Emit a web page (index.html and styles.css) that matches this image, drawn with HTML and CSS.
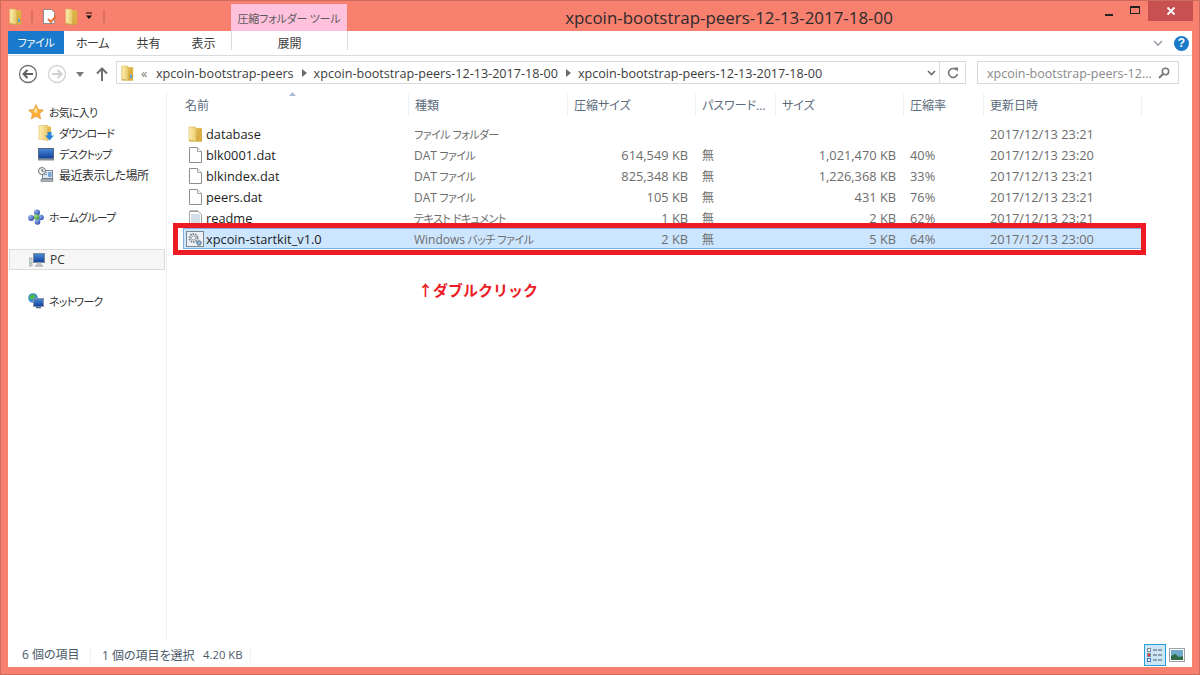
FILE: index.html
```html
<!DOCTYPE html>
<html lang="ja">
<head>
<meta charset="utf-8">
<title>xpcoin-bootstrap-peers-12-13-2017-18-00</title>
<link rel="stylesheet" href="styles.css">
</head>
<body>
<svg class="defs" width="0" height="0" aria-hidden="true">
  <defs>
    <linearGradient id="fy" x1="0" y1="0" x2="1" y2="0"><stop offset="0" stop-color="#fdf0b4"/><stop offset="1" stop-color="#e9c766"/></linearGradient>
    <linearGradient id="fb" x1="0" y1="0" x2="0" y2="1"><stop offset="0" stop-color="#e7c25c"/><stop offset="1" stop-color="#c99c34"/></linearGradient>
    <linearGradient id="scr" x1="0" y1="0" x2="0" y2="1"><stop offset="0" stop-color="#4a8bd8"/><stop offset="1" stop-color="#123f9c"/></linearGradient>
    <radialGradient id="sb" cx=".35" cy=".3" r=".8"><stop offset="0" stop-color="#8fb0ee"/><stop offset="1" stop-color="#2a47a8"/></radialGradient>
    <radialGradient id="sg" cx=".35" cy=".3" r=".8"><stop offset="0" stop-color="#a6e08a"/><stop offset="1" stop-color="#2f8f2a"/></radialGradient>
    <symbol id="folder" viewBox="0 0 16 16" preserveAspectRatio="none">
      <path d="M2 1h6l1.500 1H15v13.500H2z" fill="url(#fb)"/>
      <path d="M2 1h6.500l1 2v12.500L2 14z" fill="url(#fy)" stroke="#d9b65a" stroke-width=".6"/>
      <path d="M11 3h3.500v12.500H11z" fill="#dcb044"/>
    </symbol>
    <symbol id="doc" viewBox="0 0 16 18">
      <path d="M2.500 1.500h8l4 4v11h-12z" fill="#fff" stroke="#8e8e8e"/>
      <path d="M10.500 1.500v4h4" fill="#f2f2f2" stroke="#a8a8a8"/>
    </symbol>
    <symbol id="txt" viewBox="0 0 16 18">
      <path d="M2.500 2.500h9l3 3v11h-12z" fill="#fff" stroke="#a3a3a3"/>
      <path d="M4 2v-1M6 2v-1M8 2v-1M10 2v-1" stroke="#777"/>
      <path d="M4 6h9M4 8h9M4 10h9M4 12h9M4 14h9" stroke="#a9bdd2"/>
    </symbol>
    <symbol id="bat" viewBox="0 0 18 16">
      <rect x=".5" y=".5" width="17" height="15" fill="#eef1f4" stroke="#7c8790"/>
      <circle cx="7.500" cy="7" r="4" fill="none" stroke="#77828c" stroke-width="2" stroke-dasharray="1.500 1"/>
      <circle cx="7.500" cy="7" r="2" fill="#fff" stroke="#8d98a2"/>
      <circle cx="13" cy="12" r="2.200" fill="#9db8d2" stroke="#56718a"/>
    </symbol>
    <symbol id="star" viewBox="0 0 16 16">
      <path d="M8 .5l2.300 5 5.200.6-3.900 3.600 1.100 5.300L8 12.300 3.300 15l1.100-5.300L.5 6.100l5.200-.6z" fill="#fbb03b" stroke="#e0902c" stroke-width=".6"/>
      <path d="M8 3l1.400 3.400L8 9.500 5.500 7.200z" fill="#fde6a8"/>
    </symbol>
    <symbol id="dl" viewBox="0 0 16 16">
      <path d="M1 .5h9v15l-9-1.500z" fill="url(#fy)" stroke="#d9b65a" stroke-width=".6"/>
      <path d="M10 1.500h3v8h-3z" fill="#e4b948"/>
      <path d="M9.500 7h4v3.500H16L11.500 15.500 7 10.500h2.500z" fill="#2b86d8"/>
    </symbol>
    <symbol id="desk" viewBox="0 0 16 16">
      <rect x=".5" y="2.500" width="15" height="10" fill="url(#scr)" stroke="#53667c"/>
      <rect x="0" y="12.500" width="16" height="2" fill="#7d8b9b"/>
    </symbol>
    <symbol id="recent" viewBox="0 0 16 16">
      <rect x="4.500" y="3.500" width="10" height="8" fill="#dfe7ef" stroke="#7c8790"/>
      <path d="M6 5.500h3M6 7.500h3M10.500 5.500h2.500v4h-2.500z" fill="#7fb0dd" stroke="#6ea3d4"/>
      <path d="M3 12h12v2.500H3z" fill="#aeb6bd" stroke="#6c747b" stroke-width=".6"/>
      <circle cx="4" cy="4" r="3.500" fill="#f3f3f3" stroke="#6d7379"/>
      <path d="M4 2v2.200h1.800" fill="none" stroke="#555"/>
    </symbol>
    <symbol id="home" viewBox="0 0 16 16">
      <circle cx="9" cy="3.500" r="3" fill="url(#sb)"/>
      <circle cx="3.200" cy="9" r="3" fill="url(#sb)"/>
      <circle cx="13" cy="8.500" r="2.800" fill="url(#sb)"/>
      <circle cx="9.500" cy="13" r="2.800" fill="url(#sb)"/>
      <circle cx="8.500" cy="8" r="2.700" fill="url(#sg)"/>
    </symbol>
    <symbol id="pc" viewBox="0 0 16 16">
      <rect x="0" y="6" width="3" height="8" fill="#d6dadd" stroke="#8a9198" stroke-width=".6"/>
      <path d="M1 11h1" stroke="#4cae4c"/>
      <rect x="4.500" y="1.500" width="11" height="9" fill="url(#scr)" stroke="#7f8b96"/>
      <path d="M8 10.500h4l1 3H7z" fill="#bcc3ca"/>
      <path d="M6 13.500h8v1H6z" fill="#8d959c"/>
    </symbol>
    <symbol id="net" viewBox="0 0 16 16">
      <circle cx="5" cy="5" r="4.800" fill="#3a8fd6"/>
      <path d="M2 2.500c2-1.500 5-1 6 .5L5.500 5.500 3 6.500 1 5z" fill="#4cb648"/>
      <rect x="5.500" y="5.500" width="10" height="8" fill="url(#scr)" stroke="#8a97a3"/>
      <path d="M8 13.500h5v1.800H8z" fill="#4e6c8c"/>
    </symbol>
  </defs>
</svg>

<div class="window">
  <header class="titlebar">
    <div class="qat">
      <svg class="qat-folder" width="14" height="17"><use href="#folder" width="14" height="17"/><rect x="10" y="11" width="2" height="3" fill="#4aa3e0"/></svg>
      <span class="qat-sep"></span>
      <svg class="qat-doc" width="16" height="17" viewBox="0 0 16 17">
        <path d="M1.500 1.500h8l3 3v11h-11z" fill="#fff" stroke="#8d8d8d"/>
        <path d="M6 11l3 3 5-6" fill="none" stroke="#e8703a" stroke-width="2"/>
      </svg>
      <svg class="qat-folder2" width="14" height="17"><use href="#folder" width="14" height="17"/></svg>
      <svg class="qat-more" width="8" height="8" viewBox="0 0 8 8"><path d="M1 1h6" stroke="#111"/><path d="M1 3.500h6L4 7z" fill="#111"/></svg>
      <span class="qat-sep qat-sep-last"></span>
    </div>
    <div class="tool-tab">圧縮フォルダー ツール</div>
    <h1 class="title">xpcoin-bootstrap-peers-12-13-2017-18-00</h1>
    <div class="controls">
      <span class="ctl ctl-min"><i></i></span>
      <span class="ctl ctl-max"><i></i></span>
      <span class="ctl ctl-close">
        <svg width="10" height="10" viewBox="0 0 10 10"><path d="M1.500 1.500l7 7M8.500 1.500l-7 7" stroke="#fff" stroke-width="1.800"/></svg>
      </span>
    </div>
  </header>

  <div class="app">
    <nav class="ribbon">
      <span class="tab tab-file">ファイル</span>
      <span class="tab tab-home">ホーム</span>
      <span class="tab tab-share">共有</span>
      <span class="tab tab-view">表示</span>
      <span class="tab tab-extract">展開</span>
      <span class="ribbon-end">
        <svg width="10" height="7" viewBox="0 0 10 7"><path d="M1 1l4 4 4-4" fill="none" stroke="#9aa0a6" stroke-width="1.600"/></svg>
        <span class="help">?</span>
      </span>
    </nav>

    <div class="addressbar">
      <svg class="nav-btn" width="20" height="20" viewBox="0 0 20 20">
        <circle cx="10" cy="10" r="8.500" fill="#fff" stroke="#6f6f6f" stroke-width="1.300"/>
        <path d="M15 10H6M9.500 6L5.500 10l4 4" fill="none" stroke="#5f5f5f" stroke-width="2"/>
      </svg>
      <svg class="nav-btn nav-fwd" width="20" height="20" viewBox="0 0 20 20">
        <circle cx="10" cy="10" r="8.500" fill="#fff" stroke="#d2d2d2" stroke-width="1.300"/>
        <path d="M5 10h9M10.500 6l4 4-4 4" fill="none" stroke="#cfcfcf" stroke-width="2"/>
      </svg>
      <svg class="nav-drop" width="8" height="5" viewBox="0 0 8 5"><path d="M0 0h8L4 5z" fill="#7b7b7b"/></svg>
      <svg class="nav-up" width="12" height="14" viewBox="0 0 12 14"><path d="M6 14V2M1 6.500L6 1.500l5 5" fill="none" stroke="#6f6f6f" stroke-width="2"/></svg>
      <div class="path">
        <svg class="path-folder" width="14" height="16"><use href="#folder" width="14" height="16"/><rect x="10" y="10" width="2" height="3" fill="#4aa3e0"/></svg>
        <span class="crumb-more">«</span>
        <span class="crumb">xpcoin-bootstrap-peers</span>
        <svg class="crumb-arrow" width="5" height="8" viewBox="0 0 5 8"><path d="M0 0l5 4-5 4z" fill="#6b6b6b"/></svg>
        <span class="crumb">xpcoin-bootstrap-peers-12-13-2017-18-00</span>
        <svg class="crumb-arrow" width="5" height="8" viewBox="0 0 5 8"><path d="M0 0l5 4-5 4z" fill="#6b6b6b"/></svg>
        <span class="crumb">xpcoin-bootstrap-peers-12-13-2017-18-00</span>
        <svg class="path-chev" width="9" height="6" viewBox="0 0 9 6"><path d="M1 1l3.500 3.500L8 1" fill="none" stroke="#6b6b6b" stroke-width="1.600"/></svg>
        <span class="path-refresh">
          <svg width="12" height="12" viewBox="0 0 12 12"><path d="M9.500 3A4.500 4.500 0 1 0 10.500 7" fill="none" stroke="#777" stroke-width="1.600"/><path d="M7 .5h4v4z" fill="#777"/></svg>
        </span>
      </div>
      <div class="search">
        <span class="search-text">xpcoin-bootstrap-peers-12...</span>
        <svg width="12" height="12" viewBox="0 0 12 12"><circle cx="7.500" cy="4.500" r="3.200" fill="none" stroke="#777" stroke-width="1.500"/><path d="M5 7l-4 4" stroke="#777" stroke-width="2"/></svg>
      </div>
    </div>

    <div class="middle">
      <aside class="navpane">
        <div class="navgroup">
          <div class="navitem"><svg width="16" height="16"><use href="#star"/></svg><span class="nav-kana">お気に入り</span></div>
          <div class="navitem navchild"><svg width="16" height="16"><use href="#dl"/></svg><span class="nav-kana">ダウンロード</span></div>
          <div class="navitem navchild"><svg width="16" height="16"><use href="#desk"/></svg><span class="nav-kana">デスクトップ</span></div>
          <div class="navitem navchild"><svg width="16" height="16"><use href="#recent"/></svg><span class="nav-kanji">最近表示した場所</span></div>
        </div>
        <div class="navgroup">
          <div class="navitem"><svg width="16" height="16"><use href="#home"/></svg><span class="nav-kana">ホームグループ</span></div>
        </div>
        <div class="navgroup">
          <div class="navitem navsel"><svg width="16" height="16"><use href="#pc"/></svg><span>PC</span></div>
        </div>
        <div class="navgroup">
          <div class="navitem"><svg width="16" height="16"><use href="#net"/></svg><span class="nav-kana">ネットワーク</span></div>
        </div>
      </aside>

      <section class="files">
        <div class="cols colhead">
          <div class="hc hc-name">名前<svg class="sort" width="7" height="4" viewBox="0 0 7 4"><path d="M3.500 0L7 4H0z" fill="#a9bcd0"/></svg></div>
          <div class="hc">種類</div>
          <div class="hc">圧縮サイズ</div>
          <div class="hc">パスワード...</div>
          <div class="hc">サイズ</div>
          <div class="hc">圧縮率</div>
          <div class="hc hc-last">更新日時</div>
        </div>
        <div class="cols row">
          <div class="c-name"><svg width="16" height="16"><use href="#folder"/></svg><span>database</span></div>
          <div class="c-type">ファイル フォルダー</div><div class="c-num"></div><div class="c-pw"></div><div class="c-num"></div><div class="c-pct"></div>
          <div class="c-date">2017/12/13 23:21</div>
        </div>
        <div class="cols row">
          <div class="c-name"><svg width="16" height="18"><use href="#doc"/></svg><span>blk0001.dat</span></div>
          <div class="c-type"><span class="lat">DAT</span> ファイル</div><div class="c-num">614,549 KB</div><div class="c-pw">無</div><div class="c-num">1,021,470 KB</div><div class="c-pct">40%</div>
          <div class="c-date">2017/12/13 23:20</div>
        </div>
        <div class="cols row">
          <div class="c-name"><svg width="16" height="18"><use href="#doc"/></svg><span>blkindex.dat</span></div>
          <div class="c-type"><span class="lat">DAT</span> ファイル</div><div class="c-num">825,348 KB</div><div class="c-pw">無</div><div class="c-num">1,226,368 KB</div><div class="c-pct">33%</div>
          <div class="c-date">2017/12/13 23:21</div>
        </div>
        <div class="cols row">
          <div class="c-name"><svg width="16" height="18"><use href="#doc"/></svg><span>peers.dat</span></div>
          <div class="c-type"><span class="lat">DAT</span> ファイル</div><div class="c-num">105 KB</div><div class="c-pw">無</div><div class="c-num">431 KB</div><div class="c-pct">76%</div>
          <div class="c-date">2017/12/13 23:21</div>
        </div>
        <div class="cols row">
          <div class="c-name"><svg width="16" height="18"><use href="#txt"/></svg><span>readme</span></div>
          <div class="c-type">テキスト ドキュメント</div><div class="c-num">1 KB</div><div class="c-pw">無</div><div class="c-num">2 KB</div><div class="c-pct">62%</div>
          <div class="c-date">2017/12/13 23:21</div>
        </div>
        <div class="cols row row-sel">
          <div class="c-name"><svg width="18" height="16"><use href="#bat"/></svg><span>xpcoin-startkit_v1.0</span></div>
          <div class="c-type"><span class="lat">Windows</span> バッチ ファイル</div><div class="c-num">2 KB</div><div class="c-pw">無</div><div class="c-num">5 KB</div><div class="c-pct">64%</div>
          <div class="c-date">2017/12/13 23:00</div>
        </div>
      </section>
    </div>

    <footer class="status">
      <span class="st st-count">6 個の項目</span>
      <span class="st st-sel">1 個の項目を選択</span>
      <span class="st st-size">4.20 KB</span>
      <span class="views">
        <span class="view view-on">
          <svg width="16" height="16" viewBox="0 0 16 16">
            <rect x=".5" y="1.500" width="3" height="3" fill="#fff" stroke="#7c8a99"/><rect x=".5" y="6.500" width="3" height="3" fill="#e33" stroke="#7c8a99"/><rect x=".5" y="11.500" width="3" height="3" fill="#fff" stroke="#3a72c0"/>
            <path d="M6 3h4M11 3h4M6 8h4M11 8h4M6 13h4M11 13h4" stroke="#4c5b6b"/>
          </svg>
        </span>
        <span class="view">
          <svg width="16" height="14" viewBox="0 0 16 14">
            <rect x=".5" y=".5" width="15" height="13" fill="#fff" stroke="#9aa3ab"/>
            <rect x="2" y="2" width="12" height="10" fill="#6fa8c8"/><path d="M2 12V8l4-2 4 3 4-1v4z" fill="#2e6b46"/>
          </svg>
        </span>
      </span>
    </footer>
  </div>

  <div class="redbox"></div>
  <div class="note">↑ダブルクリック</div>
</div>
</body>
</html>
```

FILE: styles.css
```css
* { box-sizing: border-box; }
html, body { margin: 0; padding: 0; }
body {
  width: 1200px;
  height: 675px;
  overflow: hidden;
  font-family: "Open Sans", "Noto Sans CJK JP", sans-serif;
  font-size: 12px;
  font-feature-settings: "palt";
  color: #1e1e1e;
}
.defs { position: absolute; }
svg { display: block; flex: none; }

.window {
  position: relative;
  width: 1200px;
  height: 675px;
  display: flex;
  flex-direction: column;
  background: #f8806f;
  border: 1px solid #cf6a5e;
  padding: 0 7px 7px;
}

/* title bar */
.titlebar {
  height: 30px;
  display: flex;
  flex: none;
}
.qat {
  width: 223px;
  display: flex;
  align-items: center;
}
.qat-sep { width: 2px; height: 13px; background: #fbb3a8; border: 0 solid #d96f60; border-width: 0 1px; margin-left: 9px; }
.qat-doc { margin-left: 9px; }
.qat-folder2 { margin-left: 6px; }
.qat-more { margin-left: 7px; }
.qat-sep-last { margin-left: 10px; }
.tool-tab {
  width: 116px;
  margin-top: 3px;
  background: #ffc1dc;
  color: #5a5a5a;
  text-align: center;
  font-size: 11px;
  letter-spacing: -.2px;
  line-height: 29px;
  height: 27px;
  white-space: nowrap;
}
.title {
  flex: 1;
  margin: 0;
  padding-left: 13px;
  text-align: center;
  font-weight: 400;
  font-size: 16.900px;
  line-height: 33px;
  color: #2b2b2b;
  white-space: nowrap;
}
.controls {
  display: flex;
  margin-right: -1px;
  height: 20px;
}
.ctl { display: flex; align-items: center; justify-content: center; }
.ctl-min { width: 21px; margin-right: 4px; }
.ctl-min i { width: 8px; height: 2px; background: #222; margin-top: 7px; }
.ctl-max { width: 24px; margin-right: 1px; }
.ctl-max i { width: 10px; height: 8px; border: 1px solid #222; border-top-width: 2px; margin-top: -3px; }
.ctl-close { width: 45px; background: #c75050; }

/* app */
.app {
  flex: 1;
  display: flex;
  flex-direction: column;
  background: #fff;
  min-height: 0;
}

.ribbon {
  height: 25px;
  flex: none;
  display: flex;
  border-bottom: 1px solid #dadbdc;
  color: #3c3c3c;
}
.tab { line-height: 26px; text-align: center; }
.tab-file { width: 56px; height: 23px; background: #1979ca; color: #fff; line-height: 24px; font-size: 11px; letter-spacing: -.3px; }
.tab-home { width: 57px; letter-spacing: -.5px; }
.tab-share { width: 55px; }
.tab-view { width: 55px; }
.tab-extract {
  width: 117px;
  height: 19px;
  border: 0 solid #dadbdc;
  border-width: 0 1px;
}
.ribbon-end {
  margin-left: auto;
  display: flex;
  align-items: center;
  gap: 11px;
  padding: 1px 3px 0 0;
}
.help {
  width: 15px;
  height: 15px;
  border-radius: 50%;
  background: #1979ca;
  color: #fff;
  font: 700 12px/15px "Liberation Sans", sans-serif;
  text-align: center;
}

.addressbar {
  height: 36px;
  flex: none;
  display: flex;
  align-items: center;
  padding: 0 13px 0 10px;
  color: #3c3c3c;
}
.nav-fwd { margin-left: 9px; }
.nav-drop { margin-left: 9px; }
.nav-up { margin-left: 12px; }
.path {
  width: 850px;
  height: 23px;
  margin: -3px 0 0 8px;
  border: 1px solid #d9d9d9;
  display: flex;
  align-items: center;
  padding-left: 3px;
  font-size: 12.600px;
  white-space: nowrap;
}
.crumb-more { margin-left: 7px; color: #777; width: 14px; padding-top: 2px; }
.crumb { margin-left: 1px; padding-top: 2px; }
.crumb-arrow { margin: 1px 6px 0 8px; }
.path-chev { margin-left: auto; margin-right: 3px; }
.path-refresh {
  width: 26px;
  height: 21px;
  border-left: 1px solid #d9d9d9;
  display: flex;
  align-items: center;
  justify-content: center;
}
.search {
  width: 202px;
  height: 23px;
  margin: -3px 0 0 11px;
  border: 1px solid #d9d9d9;
  display: flex;
  align-items: center;
  justify-content: space-between;
  padding: 0 8px 0 9px;
  color: #8a8a8a;
  font-size: 12.500px;
}
.search-text { padding-top: 2px; }

.middle { flex: 1; display: flex; min-height: 0; }

.navpane {
  width: 159px;
  flex: none;
  border-right: 1px solid #efefef;
  padding-top: 10px;
  display: flex;
  flex-direction: column;
  gap: 21px;
}
.navitem {
  height: 21px;
  display: flex;
  align-items: center;
  gap: 5px;
  padding-left: 20px;
  color: #333;
  white-space: nowrap;
}
.navitem > * { margin-top: -2px; }
.nav-kana { font-size: 11px; letter-spacing: -.8px; }
.nav-kanji { letter-spacing: -.5px; }
.navchild { padding-left: 30px; }
.navsel {
  margin: 0 1px;
  padding-left: 19px;
  background: #f6f6f6;
  border: 1px solid #dcdcdc;
}
.navsel > * { margin-top: 0; }

.files { flex: 1; padding-left: 16px; min-width: 0; }
.cols {
  display: grid;
  grid-template-columns: 225px 159px 128px 80px 128px 80px 159px;
  width: 959px;
}
.colhead { height: 31px; padding-top: 2px; }
.hc {
  height: 22px;
  line-height: 24px;
  padding-left: 6px;
  border-left: 1px solid #eef1f4;
  color: #5b6b7c;
  white-space: nowrap;
  overflow: hidden;
}
.hc-name { position: relative; padding-left: 2px; border-left: 0; overflow: visible; }
.hc-last { border-right: 1px solid #eef1f4; }
.sort { position: absolute; left: 106px; top: -2px; }

.row { height: 21px; align-items: center; color: #6d6d6d; line-height: 20px; padding-top: 2px; }
.c-name { display: flex; align-items: center; gap: 3px; padding-left: 4px; color: #1e1e1e; font-size: 12.800px; margin-top: -2px; }
.c-type { padding-left: 6px; white-space: nowrap; font-size: 11px; letter-spacing: -.5px; }
.lat { font-size: 12px; letter-spacing: 0; }
.c-num { text-align: right; padding-right: 7px; font-size: 12.800px; margin-top: -2px; }
.c-pw { padding-left: 7px; white-space: nowrap; }
.c-pct { padding-left: 7px; white-space: nowrap; font-size: 12.800px; margin-top: -2px; }
.c-date { padding-left: 7px; white-space: nowrap; font-size: 12.800px; margin-top: -2px; }
.row-sel {
  background: #cde6ff;
  box-shadow: inset 0 0 0 1px #7fb0e0;
}
.row-sel .c-name svg { margin-left: -1px; margin-right: -1px; }

.status {
  height: 27px;
  flex: none;
  display: flex;
  align-items: center;
  padding: 2px 0 0 14px;
  color: #4b5a6a;
}
.st-count { width: 69px; border-right: 1px solid #eef0f2; margin-right: 11px; line-height: 16px; white-space: nowrap; }
.st-sel { width: 101px; white-space: nowrap; }
.st-size { width: 48px; font-size: 11.300px; border-right: 1px solid #eef0f2; line-height: 16px; white-space: nowrap; }
.views { margin-left: auto; display: flex; margin-right: 4px; }
.view { width: 22px; height: 22px; display: flex; align-items: center; justify-content: center; }
.view-on { background: #cde6f7; border: 1px solid #26a0da; }

/* annotation overlay */
.redbox {
  position: absolute;
  left: 172px;
  top: 222px;
  width: 973px;
  height: 32px;
  border: 5px solid #ed1c24;
}
.note {
  position: absolute;
  left: 417px;
  top: 278px;
  color: #ed1c24;
  font: 700 15px/22px "Noto Sans CJK JP", sans-serif;
  font-feature-settings: normal;
  white-space: nowrap;
}
```
